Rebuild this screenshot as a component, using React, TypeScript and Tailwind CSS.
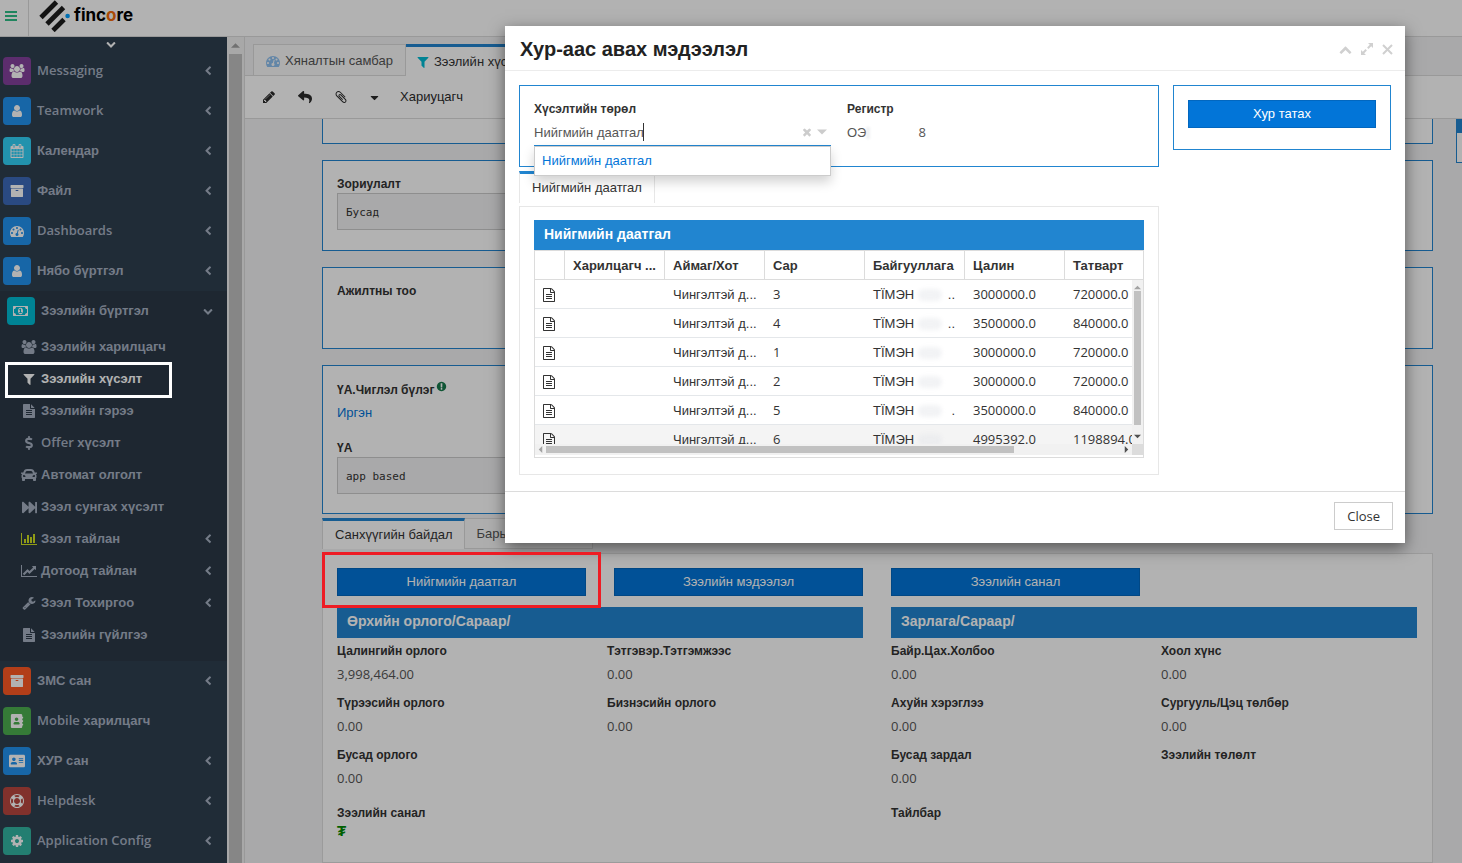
import type { ReactNode } from "react";
import {
  FaAddressBook,
  FaAddressCard,
  FaCar,
  FaCaretDown,
  FaDollarSign,
  FaFastForward,
  FaReply,
} from "react-icons/fa";

// Latin text and numbers use Open Sans, Cyrillic falls to the Arial metrics
const LATIN = "font-['Open_Sans',sans-serif]";

const glyphs = {
  user: "M1536 1399q0 109-62.5 187t-150.5 78h-854q-88 0-150.5-78t-62.5-187q0-85 8.5-160.5t31.5-152 58.5-131 94-89 134.5-34.5q131 128 313 128t313-128q76 0 134.5 34.5t94 89 58.5 131 31.5 152 8.5 160.5zm-256-887q0 159-112.5 271.5t-271.5 112.5-271.5-112.5-112.5-271.5 112.5-271.5 271.5-112.5 271.5 112.5 112.5 271.5z",
  users:
    "M657 896q-162 5-265 128h-134q-82 0-138-40.5t-56-118.5q0-353 124-353 6 0 43.5 21t97.5 42.5 119 21.5q67 0 133-23-5 37-5 66 0 159 90 283zm1071 637q0 120-73 189.5t-194 69.5h-874q-121 0-194-69.5t-73-189.5q0-53 3.5-103.5t14-109 26.5-108.5 43-97.5 62-81 85.5-53.5 111.5-20q10 0 43 21.5t73 48 107 48 135 21.5 135-21.5 107-48 73-48 43-21.5q61 0 111.5 20t85.5 53.5 62 81 43 97.5 26.5 108.5 14 109 3.5 103.5zm-1024-1277q0 106-75 181t-181 75-181-75-75-181 75-181 181-75 181 75 75 181zm704 384q0 159-112.5 271.5t-271.5 112.5-271.5-112.5-112.5-271.5 112.5-271.5 271.5-112.5 271.5 112.5 112.5 271.5zm576 225q0 78-56 118.5t-138 40.5h-134q-103-123-265-128 90-124 90-283 0-29-5-66 66 23 133 23 59 0 119-21.5t97.5-42.5 43.5-21q124 0 124 353zm-128-609q0 106-75 181t-181 75-181-75-75-181 75-181 181-75 181 75 75 181z",
  calendar:
    "M192 1664h288v-288h-288v288zm352 0h320v-288h-320v288zm-352-352h288v-320h-288v320zm352 0h320v-320h-320v320zm-352-384h288v-288h-288v288zm736 736h320v-288h-320v288zm-384-736h320v-288h-320v288zm768 736h288v-288h-288v288zm-384-352h320v-320h-320v320zm-352-864v-288q0-13-9.5-22.5t-22.5-9.5h-64q-13 0-22.5 9.5t-9.5 22.5v288q0 13 9.5 22.5t22.5 9.5h64q13 0 22.5-9.5t9.5-22.5zm736 864h288v-320h-288v320zm-384-384h320v-288h-320v288zm384 0h288v-288h-288v288zm32-480v-288q0-13-9.5-22.5t-22.5-9.5h-64q-13 0-22.5 9.5t-9.5 22.5v288q0 13 9.5 22.5t22.5 9.5h64q13 0 22.5-9.5t9.5-22.5zm384-64v1280q0 52-38 90t-90 38h-1408q-52 0-90-38t-38-90v-1280q0-52 38-90t90-38h128v-96q0-66 47-113t113-47h64q66 0 113 47t47 113v96h384v-96q0-66 47-113t113-47h64q66 0 113 47t47 113v96h128q52 0 90 38t38 90z",
  archive:
    "M1088 832q0-26-19-45t-45-19h-256q-26 0-45 19t-19 45 19 45 45 19h256q26 0 45-19t19-45zm576-192v960q0 26-19 45t-45 19h-1408q-26 0-45-19t-19-45v-960q0-26 19-45t45-19h1408q26 0 45 19t19 45zm64-448v256q0 26-19 45t-45 19h-1536q-26 0-45-19t-19-45v-256q0-26 19-45t45-19h1536q26 0 45 19t19 45z",
  gauge:
    "M384 1152q0-53-37.5-90.5t-90.5-37.5-90.5 37.5-37.5 90.5 37.5 90.5 90.5 37.5 90.5-37.5 37.5-90.5zm192-448q0-53-37.5-90.5t-90.5-37.5-90.5 37.5-37.5 90.5 37.5 90.5 90.5 37.5 90.5-37.5 37.5-90.5zm428 481l101-382q6-26-7.5-48.5t-38.5-29.5-48 6.5-30 39.5l-101 382q-60 5-107 43.5t-63 98.5q-20 77 20 146t117 89 146-20 89-117q16-60-6-117t-72-91zm660-33q0-53-37.5-90.5t-90.5-37.5-90.5 37.5-37.5 90.5 37.5 90.5 90.5 37.5 90.5-37.5 37.5-90.5zm-640-640q0-53-37.5-90.5t-90.5-37.5-90.5 37.5-37.5 90.5 37.5 90.5 90.5 37.5 90.5-37.5 37.5-90.5zm448 192q0-53-37.5-90.5t-90.5-37.5-90.5 37.5-37.5 90.5 37.5 90.5 90.5 37.5 90.5-37.5 37.5-90.5zm320 448q0 261-141 483-19 29-54 29h-1402q-35 0-54-29-141-221-141-483 0-182 71-348t191-286 286-191 348-71 348 71 286 191 191 286 71 348z",
  filter:
    "M1595 295q17 41-14 70l-493 493v742q0 42-39 59-13 5-25 5-27 0-45-19l-256-256q-19-19-19-45v-486l-493-493q-31-29-14-70 17-39 59-39h1280q42 0 59 39z",
  file: "M1596 476q14 14 28 36h-472v-472q22 14 36 28zm-476 164h544v1056q0 40-28 68t-68 28h-1344q-40 0-68-28t-28-68v-1600q0-40 28-68t68-28h800v544q0 40 28 68t68 28zm160 736v-64q0-14-9-23t-23-9h-704q-14 0-23 9t-9 23v64q0 14 9 23t23 9h704q14 0 23-9t9-23zm0-256v-64q0-14-9-23t-23-9h-704q-14 0-23 9t-9 23v64q0 14 9 23t23 9h704q14 0 23-9t9-23zm0-256v-64q0-14-9-23t-23-9h-704q-14 0-23 9t-9 23v64q0 14 9 23t23 9h704q14 0 23-9t9-23z",
  fileOutline:
    "M1596 380q28 28 48 76t20 88v1152q0 40-28 68t-68 28h-1344q-40 0-68-28t-28-68v-1600q0-40 28-68t68-28h896q40 0 88 20t76 48zm-444-244v376h376q-10-29-22-41l-313-313q-12-12-41-22zm384 1528v-1024h-416q-40 0-68-28t-28-68v-416h-768v1536h1280zm-1024-864q0-14 9-23t23-9h704q14 0 23 9t9 23v64q0 14-9 23t-23 9h-704q-14 0-23-9t-9-23v-64zm736 224q14 0 23 9t9 23v64q0 14-9 23t-23 9h-704q-14 0-23-9t-9-23v-64q0-14 9-23t23-9h704zm0 256q14 0 23 9t9 23v64q0 14-9 23t-23 9h-704q-14 0-23-9t-9-23v-64q0-14 9-23t23-9h704z",
  bars: "M640 896v512h-256v-512h256zm384-512v1024h-256v-1024h256zm1024 1152v128h-2048v-1536h128v1408h1920zm-640-896v768h-256v-768h256zm384-384v1152h-256v-1152h256z",
  trend:
    "M2048 1536v128h-2048v-1536h128v1408h1920zm-128-1248v435q0 21-19.5 29.5t-35.5-7.5l-121-121-633 633q-10 10-23 10t-23-10l-233-233-416 416-192-192 585-585q10-10 23-10t23 10l233 233 464-464-121-121q-16-16-7.5-35.5t29.5-19.5h435q14 0 23 9t9 23z",
  wrench:
    "M448 1472q0-26-19-45t-45-19-45 19-19 45 19 45 45 19 45-19 19-45zm644-420l-682 682q-37 37-90 37-52 0-91-37l-106-108q-38-36-38-90 0-53 38-91l681-681q39 98 114.5 173.5t173.5 114.5zm634-435q0 39-23 106-47 134-164.5 217.5t-258.5 83.5q-185 0-316.5-131.5t-131.5-316.5 131.5-316.5 316.5-131.5q58 0 121.5 16.5t107.5 46.5q16 11 16 28t-16 28l-293 169v224l193 107q5-3 79-48.5t135.5-81 70.5-35.5q15 0 23.5 10t8.5 25z",
  cog: "M1152 896q0-106-75-181t-181-75-181 75-75 181 75 181 181 75 181-75 75-181zm512-109v222q0 12-8 23t-20 13l-185 28q-19 54-39 91 35 50 107 138 10 12 10 25t-9 23q-27 37-99 108t-94 71q-12 0-26-9l-138-108q-44 23-91 38-16 136-29 186-7 28-36 28h-222q-14 0-24.5-8.5t-11.5-21.5l-28-184q-49-16-90-37l-141 107q-10 9-25 9-14 0-25-11-126-114-165-168-7-10-7-23 0-12 8-23 15-21 51-66.5t54-70.5q-27-50-41-99l-183-27q-13-2-21-12.5t-8-23.5v-222q0-12 8-23t19-13l186-28q14-46 39-92-40-57-107-138-10-12-10-24 0-10 9-23 26-36 98.5-107.5t94.5-71.5q13 0 26 10l138 107q44-23 91-38 16-136 29-186 7-28 36-28h222q14 0 24.5 8.5t11.5 21.5l28 184q49 16 90 37l142-107q9-9 24-9 13 0 25 10 129 119 165 170 7 8 7 22 0 12-8 23-15 21-51 66.5t-54 70.5q26 50 41 98l183 28q13 2 21 12.5t8 23.5z",
  money:
    "M768 1152h384v-96h-128v-448h-114l-148 137 77 80q42-37 55-57h2v288h-128v96zm512-256q0 70-21 142t-59.5 134-101.5 101-138 39-138-39-101.5-101-59.5-134-21-142 21-142 59.5-134 101.5-101 138-39 138 39 101.5 101 59.5 134 21 142zm512 256v-512q-106 0-181-75t-75-181h-1152q0 106-75 181t-181 75v512q106 0 181 75t75 181h1152q0-106 75-181t181-75zm128-832v1152q0 26-19 45t-45 19h-1792q-26 0-45-19t-19-45v-1152q0-26 19-45t45-19h1792q26 0 45 19t19 45z",
  lifeRing:
    "M896 0q182 0 348 71t286 191 191 286 71 348-71 348-191 286-286 191-348 71-348-71-286-191-191-286-71-348 71-348 191-286 286-191 348-71zm0 128q-190 0-361 90l194 194q82-28 167-28t167 28l194-194q-171-90-361-90zm-678 1129l194-194q-28-82-28-167t28-167l-194-194q-90 171-90 361t90 361zm678 407q190 0 361-90l-194-194q-82 28-167 28t-167-28l-194 194q171 90 361 90zm0-384q159 0 271.5-112.5t112.5-271.5-112.5-271.5-271.5-112.5-271.5 112.5-112.5 271.5 112.5 271.5 271.5 112.5zm484-217l194 194q90-171 90-361t-90-361l-194 194q28 82 28 167t-28 167z",
  pencil:
    "M491 1536l91-91-235-235-91 91v107h128v128h107zm523-928q0-22-22-22-10 0-17 7l-542 542q-7 7-7 17 0 22 22 22 10 0 17-7l542-542q7-7 7-17zm-54-192l416 416-832 832h-416v-416zm683 96q0 53-37 90l-166 166-416-416 166-165q36-38 90-38 53 0 91 38l235 234q37 39 37 91z",
  clip: "M1596 1385q0 117-79 196t-196 79q-135 0-235-100l-777-776q-113-115-113-271 0-159 110-270t269-111q158 0 273 113l605 606q10 10 10 22 0 16-30.5 46.5t-46.5 30.5q-13 0-23-10l-606-607q-79-77-181-77-106 0-179 75t-73 181q0 105 76 181l776 777q63 63 145 63 64 0 106-42t42-106q0-82-63-145l-581-581q-26-24-60-24-29 0-48 19t-19 48q0 32 25 59l410 410q10 10 10 22 0 16-31 47t-47 31q-12 0-22-10l-410-410q-63-61-63-149 0-82 57-139t139-57q88 0 149 63l581 581q100 98 100 235z",
  alert:
    "M896 128q209 0 385.5 103t279.5 279.5 103 385.5-103 385.5-279.5 279.5-385.5 103-385.5-103-279.5-279.5-103-385.5 103-385.5 279.5-279.5 385.5-103zm128 1247v-190q0-14-9-23.5t-22-9.5h-192q-13 0-23 10t-10 23v190q0 13 10 23t23 10h192q13 0 22-9.5t9-23.5zm-2-344l18-621q0-12-10-18-10-8-24-8h-220q-14 0-24 8-10 6-10 18l17 621q0 10 10 17.5t24 7.5h185q14 0 23.5-7.5t10.5-17.5z",
  times:
    "M1490 1322q0 40-28 68l-136 136q-28 28-68 28t-68-28l-294-294-294 294q-28 28-68 28t-68-28l-136-136q-28-28-28-68t28-68l294-294-294-294q-28-28-28-68t28-68l136-136q28-28 68-28t68 28l294 294 294-294q28-28 68-28t68 28l136 136q28 28 28 68t-28 68l-294 294 294 294q28 28 28 68z",
  chevronLeft:
    "M1427 301l-531 531 531 531q19 19 19 45t-19 45l-166 166q-19 19-45 19t-45-19l-742-742q-19-19-19-45t19-45l742-742q19-19 45-19t45 19l166 166q19 19 19 45t-19 45z",
  chevronDown:
    "M1683 808l-742 741q-19 19-45 19t-45-19l-742-741q-19-19-19-45.5t19-45.5l166-165q19-19 45-19t45 19l531 531 531-531q19-19 45-19t45 19l166 165q19 19 19 45.5t-19 45.5z",
  chevronUp:
    "M1683 1331l-166 165q-19 19-45 19t-45-19l-531-531-531 531q-19 19-45 19t-45-19l-166-165q-19-19-19-45.5t19-45.5l742-741q19-19 45-19t45 19l742 741q19 19 19 45.5t-19 45.5z",
};

function Icon({
  name,
  size = 14,
  wide = false,
  className = "",
}: {
  name: keyof typeof glyphs;
  size?: number;
  wide?: boolean;
  className?: string;
}) {
  return (
    <svg
      width={wide ? Math.round((size * 8) / 7) : size}
      height={size}
      viewBox={wide ? "0 0 2048 1792" : "0 0 1792 1792"}
      fill="currentColor"
      aria-hidden="true"
      className={`shrink-0 overflow-visible ${className}`}
    >
      <path d={glyphs[name]} />
    </svg>
  );
}

interface MenuItem {
  label: ReactNode;
  icon: ReactNode;
  color?: string;
  arrow?: boolean;
  active?: boolean;
}

const topItems: MenuItem[] = [
  { label: <span className={LATIN}>Messaging</span>, icon: <Icon name="users" wide />, color: "bg-[#84419c]", arrow: true },
  { label: <span className={LATIN}>Teamwork</span>, icon: <Icon name="user" />, color: "bg-[#2293f0]", arrow: true },
  { label: "Календар", icon: <Icon name="calendar" />, color: "bg-[#32d2f8]", arrow: true },
  { label: "Файл", icon: <Icon name="archive" />, color: "bg-[#3d6bba]", arrow: true },
  { label: <span className={LATIN}>Dashboards</span>, icon: <Icon name="gauge" />, color: "bg-[#2293f0]", arrow: true },
  { label: "Нябо бүртгэл", icon: <Icon name="user" />, color: "bg-[#2293f0]", arrow: true },
];

const subItems: MenuItem[] = [
  { label: "Зээлийн харилцагч", icon: <Icon name="users" wide /> },
  { label: "Зээлийн хүсэлт", icon: <Icon name="filter" />, active: true },
  { label: "Зээлийн гэрээ", icon: <Icon name="file" /> },
  {
    label: (
      <>
        <span className={LATIN}>Offer</span> хүсэлт
      </>
    ),
    icon: <FaDollarSign size={14} />,
  },
  { label: "Автомат олголт", icon: <FaCar size={16} /> },
  { label: "Зээл сунгах хүсэлт", icon: <FaFastForward size={15} /> },
  { label: "Зээл тайлан", icon: <Icon name="bars" wide className="text-[#d0e020]" />, arrow: true },
  { label: "Дотоод тайлан", icon: <Icon name="trend" wide />, arrow: true },
  { label: "Зээл Тохиргоо", icon: <Icon name="wrench" />, arrow: true },
  { label: "Зээлийн гүйлгээ", icon: <Icon name="file" /> },
];

const bottomItems: MenuItem[] = [
  { label: "ЗМС сан", icon: <Icon name="archive" />, color: "bg-[#ff5a24]", arrow: true },
  {
    label: (
      <>
        <span className={LATIN}>Mobile</span> харилцагч
      </>
    ),
    icon: <FaAddressBook size={14} />,
    color: "bg-[#4caf50]",
  },
  { label: "ХУР сан", icon: <FaAddressCard size={16} />, color: "bg-[#2293f0]", arrow: true },
  { label: <span className={LATIN}>Helpdesk</span>, icon: <Icon name="lifeRing" />, color: "bg-[#b9473f]", arrow: true },
  { label: <span className={LATIN}>Application Config</span>, icon: <Icon name="cog" />, color: "bg-[#33b5a2]", arrow: true },
];

function MenuRow({ item }: { item: MenuItem }) {
  return (
    <li>
      <a href="#" className="flex h-10 items-center gap-1.5 pr-3.5 pl-[3px]">
        <span className={`flex size-7 items-center justify-center rounded text-white ${item.color}`}>
          {item.icon}
        </span>
        <span className="flex-1">{item.label}</span>
        {item.arrow && <Icon name="chevronLeft" size={10} />}
      </a>
    </li>
  );
}

function Sidebar() {
  return (
    <nav className="w-[227px] shrink-0 overflow-hidden bg-[#2f4050] text-[13px] font-semibold text-[#a7b1c2]">
      <div className="flex h-3.5 items-center justify-center pr-1.5 text-white">
        <Icon name="chevronDown" size={10} />
      </div>
      <ul>
        {topItems.map((item, i) => (
          <MenuRow key={i} item={item} />
        ))}
        <li className="bg-[#2b3947] pb-2.5">
          <a href="#" className="flex h-10 items-center gap-1.5 pr-3.5 pl-[7px]">
            <span className="flex size-7 items-center justify-center rounded bg-[#00bcd4] text-white">
              <Icon name="money" wide />
            </span>
            <span className="flex-1">Зээлийн бүртгэл</span>
            <Icon name="chevronDown" size={10} />
          </a>
          <ul>
            {subItems.map((item, i) => (
              <li key={i}>
                <a
                  href="#"
                  className={`flex h-8 items-center gap-1 pr-3.5 pl-[21px] ${item.active ? "text-white" : ""}`}
                >
                  <span className="flex w-4 justify-center">{item.icon}</span>
                  <span className="flex-1">{item.label}</span>
                  {item.arrow && <Icon name="chevronLeft" size={10} />}
                </a>
              </li>
            ))}
          </ul>
        </li>
        {bottomItems.map((item, i) => (
          <MenuRow key={i} item={item} />
        ))}
      </ul>
    </nav>
  );
}

function Triangle({ dir, className = "" }: { dir: "up" | "down" | "left" | "right"; className?: string }) {
  const points = { up: "0,6 4,2 8,6", down: "0,2 8,2 4,6", left: "6,0 6,8 2,4", right: "2,0 6,4 2,8" };
  return (
    <svg viewBox="0 0 8 8" fill="currentColor" aria-hidden="true" className={`shrink-0 ${className}`}>
      <polygon points={points[dir]} />
    </svg>
  );
}

function Logo() {
  return (
    <a href="#" className="flex items-start gap-1 pl-2.5">
      <svg width="31" height="32" viewBox="0 0 31 32" aria-hidden="true">
        <g stroke="#1c1c1c" strokeWidth="4.8">
          <path d="M2 17.500 17.500 2" />
          <path d="M8 24 24.500 7.500" />
          <path d="M14 30.500 25 19.500" />
        </g>
        <circle cx="28.600" cy="16" r="2.300" fill="#00a0ff" />
      </svg>
      <span className="font-['Inter',sans-serif] text-[17px] leading-[30px] font-bold text-black">
        finc<span className="text-[#f26a0a]">o</span>re
      </span>
    </a>
  );
}

function Field({ label, value }: { label: string; value?: string }) {
  return (
    <div>
      <dt className="h-6 text-xs leading-6 font-bold text-[#333]">{label}</dt>
      <dd className={`h-6 leading-[22px] text-[#555] ${LATIN}`}>{value}</dd>
    </div>
  );
}

const incomes = [
  { label: "Цалингийн орлого", value: "3,998,464.00" },
  { label: "Тэтгэвэр.Тэтгэмжээс", value: "0.00" },
  { label: "Түрээсийн орлого", value: "0.00" },
  { label: "Бизнэсийн орлого", value: "0.00" },
  { label: "Бусад орлого", value: "0.00" },
];

const expenses = [
  { label: "Байр.Цах.Холбоо", value: "0.00" },
  { label: "Хоол хүнс", value: "0.00" },
  { label: "Ахуйн хэрэглээ", value: "0.00" },
  { label: "Сургууль/Цэц төлбөр", value: "0.00" },
  { label: "Бусад зардал", value: "0.00" },
  { label: "Зээлийн төлөлт" },
];

const primary = "h-7 border border-[#0267bf] bg-[#0275d8] text-center text-[13px] text-white";
const sectionTitle = "bg-[#2185d0] px-2.5 text-sm leading-7 font-bold text-white";

function FinancePane() {
  return (
    <div className="mt-1 flex-1 border border-[#dfdfdf] bg-white pt-3.5 pr-[15px] pl-3.5">
      <div className="grid grid-cols-4 gap-x-7">
        <button type="button" className={primary}>
          Нийгмийн даатгал
        </button>
        <button type="button" className={primary}>
          Зээлийн мэдээлэл
        </button>
        <button type="button" className={primary}>
          Зээлийн санал
        </button>
      </div>
      <div className="mt-[11px] grid grid-cols-2 gap-x-7">
        <section>
          <h3 className={`h-[31px] ${sectionTitle}`}>Өрхийн орлого/Сараар/</h3>
          <dl className="mt-px grid grid-cols-2 gap-x-3.5 gap-y-1">
            {incomes.map((f) => (
              <Field key={f.label} {...f} />
            ))}
          </dl>
          <p className="mt-3 text-xs leading-5 font-bold text-[#333]">Зээлийн санал</p>
          <p className="text-[15px] leading-4 font-bold text-[#008a00]">₮</p>
        </section>
        <section>
          <h3 className={`h-[31px] ${sectionTitle}`}>Зарлага/Сараар/</h3>
          <dl className="mt-px grid grid-cols-2 gap-x-3.5 gap-y-1">
            {expenses.map((f) => (
              <Field key={f.label} {...f} />
            ))}
          </dl>
          <p className="mt-3 text-xs leading-5 font-bold text-[#333]">Тайлбар</p>
        </section>
      </div>
    </div>
  );
}

const panel = "shrink-0 border border-[#2185d0] bg-white px-3.5";
const panelLabel = "text-xs font-bold text-[#333]";
const readonlyBox =
  "h-[37px] w-1/2 border border-[#ccc] bg-[#f3f3f4] px-2 pt-px font-['DejaVu_Sans_Mono',monospace] text-[11px] text-[#333]";

function Workspace() {
  return (
    <main className="flex min-w-0 flex-1 flex-col border-l border-[#dcdcdc] bg-[#f3f3f4] text-[13px]">
      <div className="flex h-[39px] shrink-0 items-end border-b border-[#dcdcdc] pl-2">
        <a
          href="#"
          className="flex h-[31px] items-center gap-[5px] border border-b-0 border-[#dcdcdc] bg-[#fafafa] px-3 pt-0.5 text-[#555]"
        >
          <Icon name="gauge" className="text-[#8fc1f0]" />
          Хяналтын самбар
        </a>
        <a
          href="#"
          className="-mb-px flex h-[32px] items-center gap-1 border-t-[3px] border-[#2185d0] bg-white px-2.5 text-[#333]"
        >
          <Icon name="filter" className="text-[#00bcd4]" />
          Зээлийн хүсэлт
        </a>
      </div>
      <div className="flex h-[43px] shrink-0 items-center border-b border-[#dcdcdc] bg-white pl-[17px] text-[#2b2b2b]">
        <button type="button" aria-label="Засах" className="w-9">
          <Icon name="pencil" />
        </button>
        <button type="button" aria-label="Буцах" className="w-9">
          <FaReply size={14} />
        </button>
        <button type="button" aria-label="Хавсралт" className="w-[34px]">
          <Icon name="clip" />
        </button>
        <button type="button" aria-label="Бусад үйлдэл" className="w-8">
          <FaCaretDown size={13} />
        </button>
        <button type="button">Хариуцагч</button>
      </div>
      <div className="flex min-h-0 flex-1 overflow-hidden pl-[77px]">
        <div className="flex min-w-0 flex-1 flex-col">
          <div className={`h-[25px] border-t-0 ${panel}`} />
          <div className={`mt-4 h-[91px] pt-3 ${panel}`}>
            <label htmlFor="purpose" className={`block h-5 leading-[22px] ${panelLabel}`}>
              Зориулалт
            </label>
            <input id="purpose" readOnly value="Бусад" className={readonlyBox} />
          </div>
          <div className={`mt-4 h-[82px] pt-3 ${panel}`}>
            <p className={`leading-[22px] ${panelLabel}`}>Ажилтны тоо</p>
          </div>
          <div className={`mt-4 h-[149px] pt-3 ${panel}`}>
            <p className={`flex h-[23px] items-center gap-0.5 ${panelLabel}`}>
              ҮА.Чиглэл бүлэг
              <Icon name="alert" size={11} className="mb-1.5 text-[#187a4c]" />
            </p>
            <a href="#" className="block h-6 leading-6 text-[#0275d8]">
              Иргэн
            </a>
            <label htmlFor="ya" className={`mt-3 block h-5 leading-[22px] ${panelLabel}`}>
              ҮА
            </label>
            <input id="ya" readOnly value="app based" className={readonlyBox} />
          </div>
          <div className="mt-1 flex h-[31px] shrink-0 text-[#333]">
            <button
              type="button"
              className="border-x border-t-[3px] border-x-[#dcdcdc] border-t-[#2185d0] bg-white pr-[11px] pl-3"
            >
              Санхүүгийн байдал
            </button>
            <button type="button" className="w-32 border border-l-0 border-[#dcdcdc] bg-[#fafafa] px-3 text-left text-[#555]">
              Барьцаа
            </button>
          </div>
          <FinancePane />
        </div>
        <aside className="ml-[23px] h-[44px] w-1.5 border border-t-[14px] border-r-0 border-[#2185d0] bg-white" />
      </div>
    </main>
  );
}

const rows = [
  { month: "3", salary: "3000000.0", tax: "720000.0", tail: ".." },
  { month: "4", salary: "3500000.0", tax: "840000.0", tail: ".." },
  { month: "1", salary: "3000000.0", tax: "720000.0", tail: "" },
  { month: "2", salary: "3000000.0", tax: "720000.0", tail: "" },
  { month: "5", salary: "3500000.0", tax: "840000.0", tail: "." },
  { month: "6", salary: "4995392.0", tax: "1198894.0", tail: "" },
];

const columns = ["Харилцагч ...", "Аймаг/Хот", "Сар", "Байгууллага", "Цалин", "Татварт"];

const cell = "h-[29px] border-b border-[#e4e7ea] pt-0.5 pb-0 whitespace-nowrap";

function InsuranceTable() {
  return (
    <div>
      <h3 className={`h-[30px] ${sectionTitle}`}>Нийгмийн даатгал</h3>
      <div className="border border-[#dcdcdc] pb-0.5">
        <div className="relative h-[193px] overflow-hidden">
          <table className="w-[630px] table-fixed border-separate border-spacing-0 text-left text-[#333]">
            <colgroup>
              <col className="w-[30px]" />
              {columns.map((c) => (
                <col key={c} className="w-[100px]" />
              ))}
            </colgroup>
            <thead>
              <tr>
                <th className="h-[29px] border-r border-b border-[#dcdcdc] p-0" />
                {columns.map((c) => (
                  <th
                    key={c}
                    className="h-[29px] border-r border-b border-[#dcdcdc] px-2 pt-0.5 pb-0 font-bold whitespace-nowrap"
                  >
                    {c}
                  </th>
                ))}
              </tr>
            </thead>
            <tbody>
              {rows.map((r) => (
                <tr key={r.month} className="last:bg-[#f4f4f4]">
                  <td className={`px-[7px] ${cell}`}>
                    <Icon name="fileOutline" />
                  </td>
                  <td className={`px-2 ${cell}`} />
                  <td className={`px-2 ${cell}`}>Чингэлтэй д...</td>
                  <td className={`px-2 ${cell} ${LATIN}`}>{r.month}</td>
                  <td className={`px-2 ${cell}`}>
                    <span className="flex items-center">
                      ТЇМЭН
                      <span className="ml-1 h-3 w-6 rounded-full bg-gray-200/50 blur-[2px]" />
                      <span className="ml-auto pr-0.5">{r.tail}</span>
                    </span>
                  </td>
                  <td className={`px-2 ${cell} ${LATIN}`}>{r.salary}</td>
                  <td className={`px-2 ${cell} ${LATIN}`}>{r.tax}</td>
                </tr>
              ))}
            </tbody>
          </table>
          <div className="absolute top-[29px] right-0 bottom-0 flex w-[11px] flex-col items-center bg-[#f1f1f1] py-1">
            <Triangle dir="up" className="size-[7px] text-[#a3a3a3]" />
            <div className="mb-2 w-[7px] flex-1 bg-[#c1c1c1]" />
            <Triangle dir="down" className="size-[7px] text-[#505050]" />
          </div>
        </div>
        <div className="flex h-[11px]">
          <div className="flex flex-1 items-center bg-[#f1f1f1] px-0.5">
            <Triangle dir="left" className="size-[7px] text-[#a3a3a3]" />
            <div className="ml-0.5 h-[7px] w-[79%] bg-[#c1c1c1]" />
            <Triangle dir="right" className="ml-auto size-[7px] text-[#505050]" />
          </div>
          <div className="w-[11px] bg-[#dcdcdc]" />
        </div>
      </div>
    </div>
  );
}

function Dialog() {
  return (
    <div
      role="dialog"
      aria-labelledby="dialog-title"
      className="absolute top-[26px] right-[57px] w-[900px] bg-white text-[13px] text-[#333] shadow-[0_5px_15px_rgba(0,0,0,0.5)]"
    >
      <header className="flex h-[45px] items-center border-b border-[#ececec] pt-0.5 pr-3 pl-[15px]">
        <h2 id="dialog-title" className="flex-1 text-xl font-bold text-[#222]">
          Хур-аас авах мэдээлэл
        </h2>
        <div className="flex items-center gap-[9px] text-[#d0d0d0]">
          <button type="button" aria-label="Хураах">
            <Icon name="chevronUp" size={13} />
          </button>
          <button type="button" aria-label="Томруулах">
            <svg width="12" height="12" viewBox="0 0 12 12" fill="currentColor">
              <path d="M12 0v5l-1.800-1.800-2.700 2.700-1.400-1.400 2.700-2.700L7 0zM0 12V7l1.800 1.800 2.700-2.700 1.400 1.400-2.700 2.700L5 12z" />
            </svg>
          </button>
          <button type="button" aria-label="Хаах">
            <svg width="11" height="11" viewBox="0 0 11 11" stroke="currentColor" strokeWidth="2">
              <path d="M1 1l9 9M10 1l-9 9" />
            </svg>
          </button>
        </div>
      </header>

      <div className="flex items-start gap-3.5 px-3.5 pt-3.5 pb-4">
        <div className="min-w-0 flex-1">
          <div className="grid h-[82px] grid-cols-2 gap-4 border border-[#2185d0] px-3.5 pt-3">
            <div>
              <label htmlFor="request-type" className="block h-[22px] text-xs leading-[22px] font-bold">
                Хүсэлтийн төрөл
              </label>
              <div className="relative h-[26px] border-b border-[#2185d0]">
                <input
                  id="request-type"
                  role="combobox"
                  aria-expanded="true"
                  aria-controls="request-options"
                  defaultValue="Нийгмийн даатгал"
                  className="h-6 w-full text-[#555] outline-none"
                />
                {/* text caret */}
                <span className="absolute top-[3px] left-[109px] h-[18px] w-px bg-[#333]" />
                <span className="absolute top-1.5 right-1 flex items-center gap-1 text-[#ccc]">
                  <Icon name="times" size={12} />
                  <Triangle dir="down" className="size-2.5" />
                </span>
                <ul
                  id="request-options"
                  role="listbox"
                  className="absolute top-full left-0 z-10 mt-px w-full border border-[#ccc] bg-white shadow-[0_6px_12px_rgba(0,0,0,0.18)]"
                >
                  <li role="option" aria-selected="true" className="h-7 px-[7px] leading-7 text-[#0275d8]">
                    Нийгмийн даатгал
                  </li>
                </ul>
              </div>
            </div>
            <div>
              <p className="h-[22px] text-xs leading-[22px] font-bold">Регистр</p>
              <p className="flex h-[26px] items-center text-[#555]">
                ОЭ
                <span className="h-3 w-1 bg-gray-200/60 blur-[1px]" />
                <span className={`ml-12 ${LATIN}`}>8</span>
              </p>
            </div>
          </div>
          <button
            type="button"
            className="mt-1 block h-8 border-x border-t-[3px] border-x-[#e7e7e7] border-t-[#2185d0] px-3 pb-0.5"
          >
            Нийгмийн даатгал
          </button>
          <div className="mt-[3px] border border-[#e7e7e7] px-3.5 pt-[13px] pb-4">
            <InsuranceTable />
          </div>
        </div>
        <div className="h-[65px] w-[218px] border border-[#2185d0] p-3.5">
          <button type="button" className={`w-full ${primary}`}>
            Хур татах
          </button>
        </div>
      </div>

      <footer className="flex h-[52px] justify-end border-t border-[#dcdcdc] pt-2.5 pr-3">
        <button type="button" className={`h-7 border border-[#ccc] px-3 pt-0.5 ${LATIN}`}>
          Close
        </button>
      </footer>
    </div>
  );
}

export default function App() {
  return (
    <div className="relative flex h-screen flex-col overflow-hidden bg-[#f3f3f4] font-['Liberation_Sans',sans-serif]">
      <header className="flex h-[37px] shrink-0 border-b border-[#dcdcdc] bg-white">
        <button type="button" aria-label="Цэс" className="w-[29px] border-r border-[#dcdcdc] pb-1 pl-[5px]">
          <svg width="12" height="10" viewBox="0 0 12 10" fill="#2fbf87">
            <path d="M0 0h12v2H0zM0 4h12v2H0zM0 8h12v2H0z" />
          </svg>
        </button>
        <Logo />
      </header>
      <div className="flex min-h-0 flex-1">
        <Sidebar />
        <div className="flex w-[17px] shrink-0 flex-col items-center bg-[#f1f1f1]">
          <Triangle dir="up" className="my-1 size-[9px] text-[#a3a3a3]" />
          <div className="w-[13px] flex-1 bg-[#c1c1c1]" />
        </div>
        <Workspace />
      </div>

      <div className="absolute inset-0 bg-black/30" />
      <Dialog />
      {/* step highlights */}
      <div className="pointer-events-none absolute top-[362px] left-[5px] h-9 w-[167px] border-[3px] border-white" />
      <div className="pointer-events-none absolute top-[552px] left-[322px] h-14 w-[279px] border-[3px] border-[#ee1c24]" />
    </div>
  );
}
